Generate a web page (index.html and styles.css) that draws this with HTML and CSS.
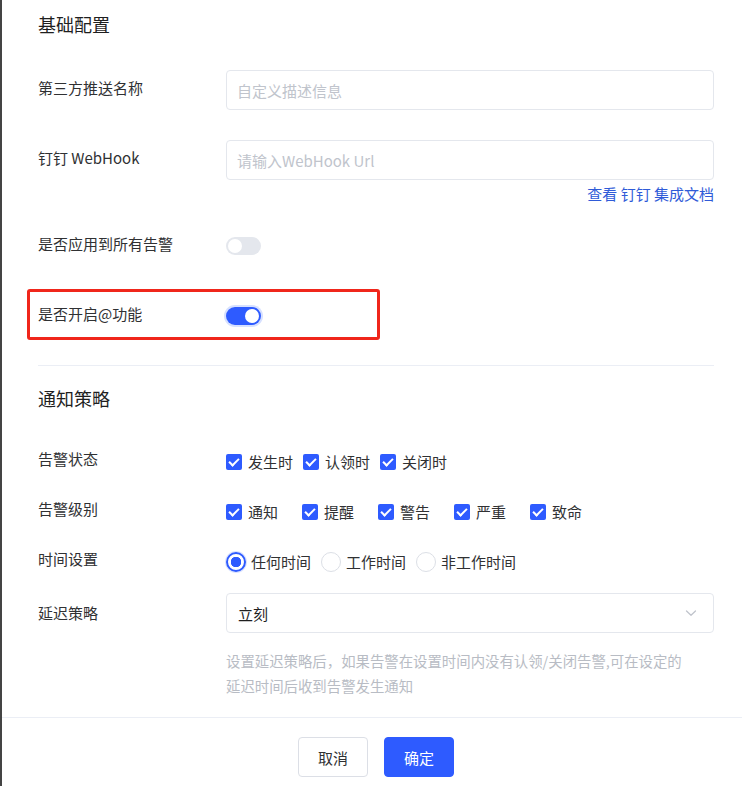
FILE: index.html
```html
<!DOCTYPE html>
<html lang="zh-CN">
<head>
    <meta charset="UTF-8">
    <meta name="viewport" content="width=device-width, initial-scale=1.0">
    <title>钉钉推送配置</title>
    <link rel="stylesheet" href="styles.css">
</head>
<body>
    <div class="drawer">
        <div class="drawer-body">
            <div class="section-title first">基础配置</div>

            <div class="form-item">
                <label class="form-label">第三方推送名称</label>
                <div class="form-content">
                    <input class="text-input" type="text" placeholder="自定义描述信息">
                </div>
            </div>

            <div class="form-item item-webhook">
                <label class="form-label">钉钉 WebHook</label>
                <div class="form-content">
                    <input class="text-input" type="text" placeholder="请输入WebHook Url">
                    <div class="doc-link"><a href="#">查看 钉钉 集成文档</a></div>
                </div>
            </div>

            <div class="form-item item-switch">
                <label class="form-label">是否应用到所有告警</label>
                <div class="form-content">
                    <span class="switch"><span class="switch-knob"></span></span>
                </div>
            </div>

            <div class="form-item item-switch highlighted">
                <label class="form-label">是否开启@功能</label>
                <div class="form-content">
                    <span class="switch is-on"><span class="switch-knob"></span></span>
                </div>
            </div>

            <div class="divider"></div>

            <div class="section-title">通知策略</div>

            <div class="form-item item-options">
                <label class="form-label">告警状态</label>
                <div class="form-content options status-group">
                    <span class="checkbox"><span class="box"></span>发生时</span>
                    <span class="checkbox"><span class="box"></span>认领时</span>
                    <span class="checkbox"><span class="box"></span>关闭时</span>
                </div>
            </div>

            <div class="form-item item-options">
                <label class="form-label">告警级别</label>
                <div class="form-content options level-group">
                    <span class="checkbox"><span class="box"></span>通知</span>
                    <span class="checkbox"><span class="box"></span>提醒</span>
                    <span class="checkbox"><span class="box"></span>警告</span>
                    <span class="checkbox"><span class="box"></span>严重</span>
                    <span class="checkbox"><span class="box"></span>致命</span>
                </div>
            </div>

            <div class="form-item item-options item-time">
                <label class="form-label">时间设置</label>
                <div class="form-content options radio-group">
                    <span class="radio is-checked"><span class="dot"></span>任何时间</span>
                    <span class="radio"><span class="dot"></span>工作时间</span>
                    <span class="radio"><span class="dot"></span>非工作时间</span>
                </div>
            </div>

            <div class="form-item item-select">
                <label class="form-label">延迟策略</label>
                <div class="form-content">
                    <div class="select">
                        <span>立刻</span>
                        <svg class="select-arrow" width="12" height="12" viewBox="0 0 12 12">
                            <path d="M1.5 4 L6 8.2 L10.5 4" fill="none" stroke="#c0c4cc" stroke-width="1.3" stroke-linecap="round" stroke-linejoin="round"/>
                        </svg>
                    </div>
                    <p class="help-text">设置延迟策略后，如果告警在设置时间内没有认领/关闭告警,可在设定的延迟时间后收到告警发生通知</p>
                </div>
            </div>
        </div>

        <div class="drawer-footer">
            <button class="btn">取消</button>
            <button class="btn btn-primary">确定</button>
        </div>
    </div>
</body>
</html>
```

FILE: styles.css
```css
* {
    box-sizing: border-box;
    margin: 0;
    padding: 0;
}

body {
    font-family: "Noto Sans CJK SC", "Liberation Sans", sans-serif;
    background: #fff;
    color: #303133;
    font-size: 15px;
}

.drawer {
    min-height: 786px;
    border-left: 2px solid #444;
    background: #fff;
}

.drawer-body {
    padding: 12px 28px 19px 36px;
}

.section-title {
    font-size: 18px;
    line-height: 24px;
    color: #1f1f1f;
    margin-bottom: 37px;
}

.section-title.first {
    margin-bottom: 34px;
}

.form-item {
    display: flex;
    align-items: flex-start;
    margin-bottom: 30px;
    position: relative;
}

.form-label {
    width: 188px;
    flex-shrink: 0;
    line-height: 36px;
    color: #303133;
}

.form-content {
    flex: 1;
}

.text-input {
    display: block;
    width: 100%;
    height: 40px;
    border: 1px solid #e4e7ed;
    border-radius: 4px;
    padding: 0 10px;
    font-family: inherit;
    font-size: 15px;
    color: #303133;
    outline: none;
}

.text-input::placeholder {
    color: #c0c4cc;
}

.item-webhook {
    margin-bottom: 21px;
}

.doc-link {
    text-align: right;
    line-height: 22px;
    margin-top: 3px;
}

.doc-link a {
    color: #2f5bd8;
    text-decoration: none;
}

/* 开关 */
.item-switch .form-content {
    height: 40px;
    display: flex;
    align-items: center;
}

.switch {
    position: relative;
    display: inline-block;
    width: 35px;
    height: 18px;
    border-radius: 9px;
    background: #e4e7ed;
}

.switch-knob {
    position: absolute;
    top: 2px;
    left: 2px;
    width: 14px;
    height: 14px;
    border-radius: 50%;
    background: #fff;
}

.switch.is-on {
    background: #2e5bff;
    box-shadow: 0 0 0 2px #d6e0ff;
}

.switch.is-on .switch-knob {
    left: 19px;
}

/* 红框标注 */
.highlighted::after {
    content: "";
    box-sizing: border-box;
    position: absolute;
    left: -11px;
    top: -7px;
    width: 353px;
    height: 51px;
    border: 3px solid #f0261b;
    border-radius: 3px;
}

.highlighted {
    margin-bottom: 29px;
}

.divider {
    height: 1px;
    background: #ebeef5;
    margin-bottom: 20px;
}

/* 选项 */
.item-options {
    margin-bottom: 20px;
}

.item-options .form-label {
    line-height: 24px;
}

.item-time {
    margin-bottom: 16px;
}

.options {
    display: flex;
    align-items: center;
    height: 30px;
}

.checkbox, .radio {
    display: inline-flex;
    align-items: center;
    line-height: 24px;
    color: #303133;
}

.checkbox .box {
    position: relative;
    width: 16px;
    height: 16px;
    border-radius: 2px;
    background: #2e5bff;
    margin-right: 6px;
}

.checkbox .box::after {
    content: "";
    position: absolute;
    left: 5px;
    top: 2px;
    width: 4px;
    height: 8px;
    border: solid #fff;
    border-width: 0 2px 2px 0;
    transform: rotate(45deg);
}

.status-group .checkbox {
    margin-right: 10px;
}

.level-group .checkbox {
    margin-right: 24px;
}

.radio {
    margin-right: 10px;
}

.radio .dot {
    width: 20px;
    height: 20px;
    border-radius: 50%;
    border: 1px solid #dcdfe6;
    margin-right: 5px;
    background: #fff;
}

.radio.is-checked .dot {
    border: 2px solid #2e5bff;
    background: radial-gradient(circle, #2e5bff 0 5px, #fff 5.5px);
    box-shadow: 0 0 0 1px #dbe3ff;
}

/* 下拉 */
.item-select {
    margin-bottom: 0;
}

.item-select .form-label {
    line-height: 40px;
}

.select {
    height: 40px;
    border: 1px solid #e4e7ed;
    border-radius: 4px;
    padding: 0 16px 0 11px;
    display: flex;
    align-items: center;
    justify-content: space-between;
    color: #1f1f1f;
}

.help-text {
    margin-top: 15px;
    max-width: 462px;
    font-size: 14.4px;
    line-height: 25px;
    color: #b8bcc4;
}

.drawer-footer {
    border-top: 1px solid #ebeef5;
    padding: 19px 0 0 8px;
    display: flex;
    justify-content: center;
    gap: 16px;
}

.btn {
    width: 70px;
    height: 40px;
    border: 1px solid #dcdfe6;
    border-radius: 4px;
    background: #fff;
    font-family: inherit;
    font-size: 15px;
    color: #303133;
    cursor: pointer;
}

.btn-primary {
    background: #2e5bff;
    border-color: #2e5bff;
    color: #fff;
}
```
